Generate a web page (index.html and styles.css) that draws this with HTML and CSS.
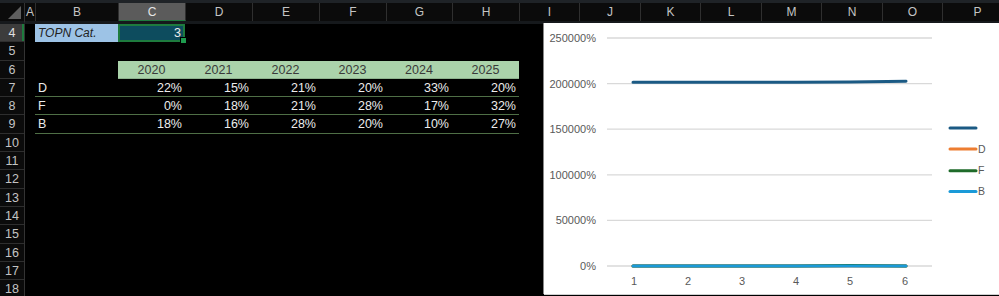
FILE: index.html
```html
<!DOCTYPE html>
<html lang="en">
<head>
<meta charset="UTF-8">
<title>TOPN chart</title>
<link rel="stylesheet" href="styles.css">
</head>
<body>

<div class="topbar"></div>

<div class="sheet">
  <!-- corner -->
  <div class="corner"><span class="tri"></span></div>

  <!-- column letters -->
  <div class="colheads">
    <div class="ch" style="width:11px">A</div>
    <div class="ch" style="width:83px">B</div>
    <div class="ch sel" style="width:67px">C</div>
    <div class="ch" style="width:67px">D</div>
    <div class="ch" style="width:67px">E</div>
    <div class="ch" style="width:67px">F</div>
    <div class="ch" style="width:66px">G</div>
    <div class="ch" style="width:67px">H</div>
    <div class="ch" style="width:60px">I</div>
    <div class="ch" style="width:61px">J</div>
    <div class="ch" style="width:60px">K</div>
    <div class="ch" style="width:61px">L</div>
    <div class="ch" style="width:60px">M</div>
    <div class="ch" style="width:61px">N</div>
    <div class="ch" style="width:60px">O</div>
    <div class="ch" style="width:70px">P</div>
  </div>

  <!-- row numbers -->
  <div class="rowheads">
    <div class="rh sel">4</div>
    <div class="rh">5</div>
    <div class="rh">6</div>
    <div class="rh">7</div>
    <div class="rh">8</div>
    <div class="rh">9</div>
    <div class="rh">10</div>
    <div class="rh">11</div>
    <div class="rh">12</div>
    <div class="rh">13</div>
    <div class="rh">14</div>
    <div class="rh">15</div>
    <div class="rh">16</div>
    <div class="rh">17</div>
    <div class="rh">18</div>
  </div>

  <!-- cells -->
  <div class="cells">
    <div class="cell label" style="grid-row:1;grid-column:2">TOPN Cat.</div>
    <div class="cell active" style="grid-row:1;grid-column:3">3<span class="handle"></span></div>

    <div class="cell year" style="grid-row:3;grid-column:3">2020</div>
    <div class="cell year" style="grid-row:3;grid-column:4">2021</div>
    <div class="cell year" style="grid-row:3;grid-column:5">2022</div>
    <div class="cell year" style="grid-row:3;grid-column:6">2023</div>
    <div class="cell year" style="grid-row:3;grid-column:7">2024</div>
    <div class="cell year" style="grid-row:3;grid-column:8">2025</div>

    <div class="cell name line" style="grid-row:4;grid-column:2">D</div>
    <div class="cell num line" style="grid-row:4;grid-column:3">22%</div>
    <div class="cell num line" style="grid-row:4;grid-column:4">15%</div>
    <div class="cell num line" style="grid-row:4;grid-column:5">21%</div>
    <div class="cell num line" style="grid-row:4;grid-column:6">20%</div>
    <div class="cell num line" style="grid-row:4;grid-column:7">33%</div>
    <div class="cell num line" style="grid-row:4;grid-column:8">20%</div>

    <div class="cell name line" style="grid-row:5;grid-column:2">F</div>
    <div class="cell num line" style="grid-row:5;grid-column:3">0%</div>
    <div class="cell num line" style="grid-row:5;grid-column:4">18%</div>
    <div class="cell num line" style="grid-row:5;grid-column:5">21%</div>
    <div class="cell num line" style="grid-row:5;grid-column:6">28%</div>
    <div class="cell num line" style="grid-row:5;grid-column:7">17%</div>
    <div class="cell num line" style="grid-row:5;grid-column:8">32%</div>

    <div class="cell name line" style="grid-row:6;grid-column:2">B</div>
    <div class="cell num line" style="grid-row:6;grid-column:3">18%</div>
    <div class="cell num line" style="grid-row:6;grid-column:4">16%</div>
    <div class="cell num line" style="grid-row:6;grid-column:5">28%</div>
    <div class="cell num line" style="grid-row:6;grid-column:6">20%</div>
    <div class="cell num line" style="grid-row:6;grid-column:7">10%</div>
    <div class="cell num line" style="grid-row:6;grid-column:8">27%</div>
  </div>
</div>

<!-- floating chart object -->
<div class="chart">
  <svg width="460" height="271" viewBox="0 0 460 271">
    <g class="grid">
      <line x1="63" y1="15" x2="388" y2="15"/>
      <line x1="63" y1="60.6" x2="388" y2="60.6"/>
      <line x1="63" y1="106.2" x2="388" y2="106.2"/>
      <line x1="63" y1="151.8" x2="388" y2="151.8"/>
      <line x1="63" y1="197.4" x2="388" y2="197.4"/>
      <line x1="63" y1="243" x2="388" y2="243"/>
    </g>
    <g class="ylab">
      <text x="52" y="19">250000%</text>
      <text x="52" y="64.6">200000%</text>
      <text x="52" y="110.2">150000%</text>
      <text x="52" y="155.8">100000%</text>
      <text x="52" y="201.4">50000%</text>
      <text x="52" y="247">0%</text>
    </g>
    <g class="xlab">
      <text x="90" y="262">1</text>
      <text x="144" y="262">2</text>
      <text x="198" y="262">3</text>
      <text x="252" y="262">4</text>
      <text x="306" y="262">5</text>
      <text x="361" y="262">6</text>
    </g>
    <polyline class="s0" points="89,59.2 144,59.2 198,59.3 252,59.2 306,59.1 362,58.3"/>
    <polyline class="s1" points="89,243 144,243 198,243 252,243 306,243 362,243"/>
    <polyline class="s2" points="89,243 144,243 198,243 252,243 306,242.6 362,243"/>
    <polyline class="s3" points="89,243 144,243 198,243 252,243 306,243 362,243"/>
    <g class="legend">
      <line class="s0" x1="406" y1="105" x2="432" y2="105"/>
      <line class="s1" x1="406" y1="126" x2="432" y2="126"/>
      <text x="434" y="129.5">D</text>
      <line class="s2" x1="406" y1="147.7" x2="432" y2="147.7"/>
      <text x="434" y="151.2">F</text>
      <line class="s3" x1="406" y1="168.6" x2="432" y2="168.6"/>
      <text x="434" y="172.1">B</text>
    </g>
  </svg>
</div>

</body>
</html>
```

FILE: styles.css
```css
body {
  margin: 0;
  padding: 0;
  background: #000;
  font-family: 'Liberation Sans', Arial, sans-serif;
  width: 999px;
  height: 296px;
  overflow: hidden;
  position: relative;
}
.topbar {
  height: 3px;
  background: #1f2327;
}
.sheet {
  display: grid;
  grid-template-columns: 25px 1fr;
  grid-template-rows: 21px 1fr;
}
.corner {
  background: #0b0b0b;
  border-right: 1px solid #333;
  border-bottom: 3px solid #16191c;
  position: relative;
}
.corner .tri {
  position: absolute;
  right: 3px;
  bottom: 2px;
  width: 0;
  height: 0;
  border-left: 13px solid transparent;
  border-bottom: 13px solid #5e5e5e;
}
.colheads {
  display: flex;
  background: #0b0b0b;
  border-bottom: 3px solid #16191c;
  height: 18px;
}
.ch {
  flex: none;
  box-sizing: border-box;
  border-right: 1px solid #2f2f2f;
  color: #c4c4c4;
  font-size: 12px;
  line-height: 18px;
  text-align: center;
}
.ch.sel {
  background: #5b5b5b;
  color: #e6e6e6;
  border-bottom: 1px solid #1e7b3e;
}
.rowheads {
  display: flex;
  flex-direction: column;
  background: #0b0b0b;
  border-right: 1px solid #333;
}
.rh {
  height: 18.3px;
  box-sizing: border-box;
  border-bottom: 1px solid #2e2e2e;
  color: #c4c4c4;
  font-size: 12.5px;
  line-height: 18px;
  text-align: center;
}
.rh.sel {
  background: #3c3c3c;
  color: #e0e0e0;
  box-shadow: inset -2px 0 0 #1e7b3e;
}
.cells {
  display: grid;
  grid-template-columns: 10px 83px 67px 67px 67px 67px 66px 67px;
  grid-auto-rows: 18.3px;
  align-content: start;
}
.cell {
  box-sizing: border-box;
  font-size: 12.5px;
  line-height: 18px;
  padding: 0 3px;
  color: #ececec;
  white-space: nowrap;
}
.cell.label {
  background: #9dc3e6;
  color: #222;
  font-style: italic;
  font-size: 12px;
}
.cell.active {
  background: #0d4c5e;
  border: 2px solid #1e7b3e;
  text-align: right;
  line-height: 14px;
  padding-right: 2px;
  position: relative;
}
.handle {
  position: absolute;
  right: -4px;
  bottom: -4px;
  width: 5px;
  height: 5px;
  background: #1e9b4e;
  border: 1px solid #000;
}
.cell.year {
  background: #abd3ab;
  color: #3a3a3a;
  text-align: center;
  border-bottom: 1px solid #8fb38f;
}
.cell.num {
  text-align: right;
}
.cell.line {
  border-bottom: 1px solid #4f6f46;
}
.chart {
  position: absolute;
  left: 544px;
  top: 23px;
  width: 460px;
  height: 271px;
  background: #fff;
  box-shadow: -1px 0 0 #888, 0 1px 0 #cfcfcf;
}
.chart svg {
  display: block;
}
.grid line {
  stroke: #d9d9d9;
  stroke-width: 1.3;
}
.ylab text {
  fill: #595959;
  font-size: 11px;
  text-anchor: end;
}
.xlab text {
  fill: #595959;
  font-size: 11px;
  text-anchor: middle;
}
.legend text {
  fill: #595959;
  font-size: 10.5px;
}
.s0, .s1, .s2, .s3 {
  fill: none;
  stroke-width: 3;
  stroke-linecap: round;
  stroke-linejoin: round;
}
.s0 { stroke: #1b5a84; }
.s1 { stroke: #ed7d31; }
.s2 { stroke: #1f6b2a; }
.s3 { stroke: #1a9ad8; }
```
